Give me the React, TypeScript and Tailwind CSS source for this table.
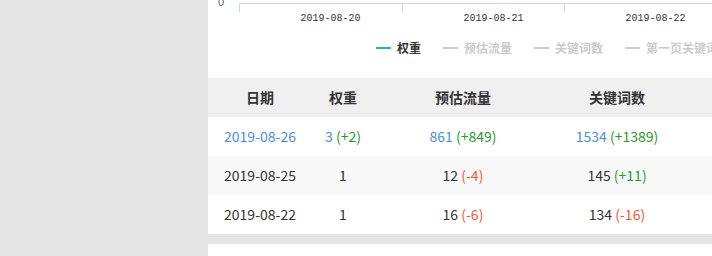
const rows = [
  { date: "2019-08-26", link: true, w: "3", wd: "+2", f: "861", fd: "+849", k: "1534", kd: "+1389" },
  { date: "2019-08-25", link: false, w: "1", wd: "", f: "12", fd: "-4", k: "145", kd: "+11" },
  { date: "2019-08-22", link: false, w: "1", wd: "", f: "16", fd: "-6", k: "134", kd: "-16" },
];

const legend = [
  { label: "权重", on: true },
  { label: "预估流量", on: false },
  { label: "关键词数", on: false },
  { label: "第一页关键词数", on: false },
];

function Val({ v, d, link }: { v: string; d: string; link: boolean }) {
  return (
    <span>
      <span className={link ? "text-[#4a8fe6]" : "text-[#333]"}>{v}</span>
      {d && (
        <span className={d.startsWith("+") ? "text-[#2a9a2a]" : "text-[#ff5533]"}> ({d})</span>
      )}
    </span>
  );
}

export default function App() {
  const cols = "grid grid-cols-[104px_62px_178px_130px_1fr] items-center text-center";
  return (
    <div
      className="flex w-[712px] h-[256px] bg-[#e6e6e6] overflow-hidden"
      style={{ fontFamily: '"Noto Sans CJK SC", "Noto Sans", sans-serif' }}
    >
      <div className="w-[208px] shrink-0" />
      <div className="flex-1 flex flex-col overflow-hidden">
        {/* chart bottom */}
        <div className="bg-white h-[78px] shrink-0 flex flex-col">
          <svg width="504" height="30" className="shrink-0">
            <text x="10" y="6" fontSize="11" fill="#666" fontFamily="Liberation Sans, sans-serif">0</text>
            <line x1="31" y1="3.5" x2="504" y2="3.5" stroke="#ccd6eb" strokeWidth="1" />
            {[31.5, 194.5, 356.5].map((x) => (
              <line key={x} x1={x} y1="3" x2={x} y2="12" stroke="#ccd6eb" strokeWidth="1" />
            ))}
            {[
              ["2019-08-20", 92.5],
              ["2019-08-21", 255.5],
              ["2019-08-22", 417.5],
            ].map(([t, x]) => (
              <text
                key={t as string}
                x={x as number}
                y="20.5"
                fontSize="11"
                textLength="60"
                lengthAdjust="spacingAndGlyphs"
                fill="#333"
                fontFamily="Liberation Mono, monospace"
              >
                {t}
              </text>
            ))}
          </svg>
          <div className="flex items-center gap-[22px] pl-[168px] mt-[10px] whitespace-nowrap">
            {legend.map((l) => (
              <div key={l.label} className="flex items-center gap-[6px] shrink-0">
                <span className={`block w-[15px] h-[2px] ${l.on ? "bg-[#2fa4dc]" : "bg-[#cccccc]"}`} />
                <span className={`text-[12px] font-bold leading-[16px] ${l.on ? "text-[#333]" : "text-[#cccccc]"}`}>
                  {l.label}
                </span>
              </div>
            ))}
          </div>
        </div>

        {/* table */}
        <div className="bg-white shrink-0 text-[14px] text-[#333]">
          <div className={`${cols} h-[39px] bg-[#f0f0f0] font-bold`}>
            <div>日期</div>
            <div>权重</div>
            <div>预估流量</div>
            <div>关键词数</div>
            <div />
          </div>
          {rows.map((r, i) => (
            <div key={r.date} className={`${cols} h-[39px] ${i % 2 === 1 ? "bg-[#f8f8f8]" : "bg-white"}`}>
              <div className={r.link ? "text-[#4a8fe6]" : ""}>{r.date}</div>
              <div><Val v={r.w} d={r.wd} link={r.link} /></div>
              <div><Val v={r.f} d={r.fd} link={r.link} /></div>
              <div><Val v={r.k} d={r.kd} link={r.link} /></div>
              <div />
            </div>
          ))}
        </div>
        <div className="h-[10px] shrink-0" />
        <div className="bg-white flex-1" />
      </div>
    </div>
  );
}
